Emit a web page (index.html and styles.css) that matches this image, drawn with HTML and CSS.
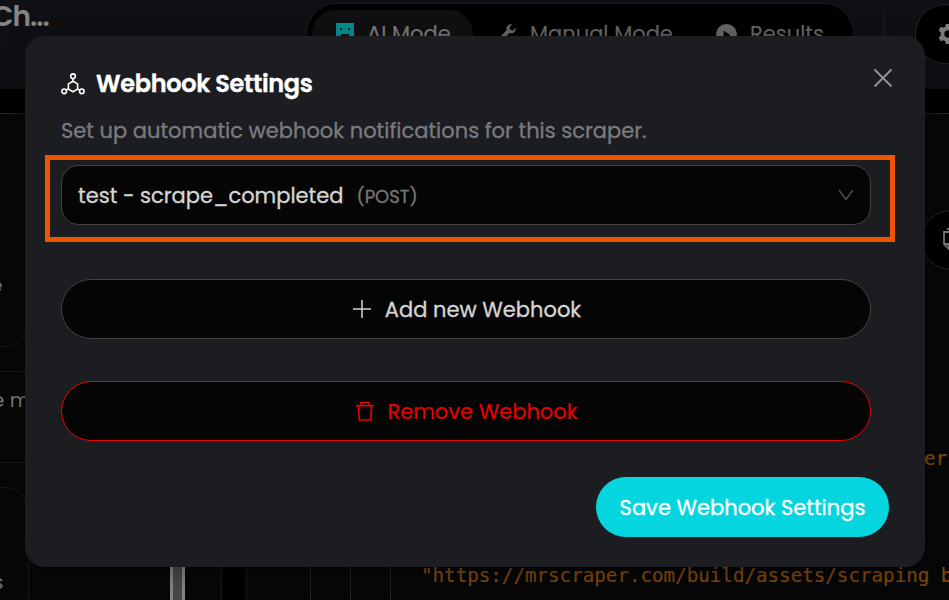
FILE: index.html
```html
<!DOCTYPE html>
<html lang="en">
<head>
<meta charset="utf-8">
<title>Webhook Settings</title>
<link rel="stylesheet" href="styles.css">
</head>
<body>
<div class="app">
  <header class="topbar">
    <div class="chat-name"><span>Ch...</span></div>
    <nav class="modes">
      <div class="mode active">
        <svg class="robot" viewBox="0 0 18 18"><path fill="#008b91" d="M0 0h18v18H0z"/><path fill="#111" d="M4 5h2v2H4zM12 5h2v2h-2zM5 11h8v2H5z"/></svg>
        <span>AI Mode</span>
      </div>
      <div class="mode manual">
        <svg class="wrench" viewBox="0 0 16 16"><path fill="#656565" d="M15.600 3.800 12.900 6.500 10.200 5.800 9.500 3.100 12.200.4A4.600 4.600 0 0 0 6.700 6.300L.7 12.200a2 2 0 0 0 2.900 2.900l6-6a4.600 4.600 0 0 0 6-5.300z"/></svg>
        <span>Manual Mode</span>
      </div>
      <div class="mode results">
        <svg class="play" viewBox="0 0 22 22"><circle cx="11" cy="11" r="11" fill="#656565"/><path fill="#000" d="m8 7 7 4.500L8 16z"/></svg>
        <span>Results</span>
      </div>
    </nav>
    <div class="bar-divider"></div>
    <div class="round-btn gear">
      <svg viewBox="0 0 24 24"><path fill="#7b7b7b" fill-rule="evenodd" d="m9.600 1-.6 3-2 1.100-2.900-1L1.700 8.200 4 10.200v3.600l-2.300 2 2.400 4.100 2.900-1 2 1.100.6 3h4.800l.6-3 2-1.100 2.900 1 2.400-4.100-2.300-2v-3.600l2.300-2-2.400-4.100-2.900 1-2-1.100-.6-3zM12 8a4 4 0 1 1 0 8 4 4 0 0 1 0-8z"/></svg>
    </div>
  </header>
  <main class="workspace">
    <aside class="history">
      <div class="card card-top"><span>e</span></div>
      <div class="row"><span>e m</span></div>
      <div class="card card-bottom"><span>s</span></div>
    </aside>
    <div class="scroll-zone"><div class="scrollbar"></div></div>
    <div class="gutter"></div>
    <section class="code">
      <div class="guide"></div><div class="guide"></div><div class="guide"></div>
      <div class="source">
        <div class="copy-row"><div class="round-btn copy">
          <svg viewBox="0 0 24 24" fill="none" stroke="#777" stroke-width="1.800"><path d="M6 2h15v17M3 5h14v17H8l-5-5zM3 17h5v5"/></svg>
        </div></div>
        <div class="code-tail">er</div>
        <div class="code-line">"https://mrscraper.com/build/assets/scraping b</div>
      </div>
    </section>
  </main>
</div>

<div class="modal">
  <div class="modal-head">
    <svg class="hook" viewBox="0 0 24 22" fill="none" stroke="#fff" stroke-width="1.600"><circle cx="12" cy="3.200" r="2.300"/><circle cx="3.200" cy="18.300" r="2.300"/><circle cx="20.800" cy="18.300" r="2.300"/><path d="M12 5.500v2.700M5.200 17.100l2.500-1.400M18.800 17.100l-2.500-1.400M12 8.200l4.600 2.700v5.200L12 18.800l-4.600-2.700v-5.200z"/></svg>
    <h2>Webhook Settings</h2>
    <svg class="close" viewBox="0 0 20 20" stroke="#96979a" stroke-width="1.800"><path d="m1.500 1.500 17 17M18.500 1.500l-17 17"/></svg>
  </div>
  <p class="lead">Set up automatic webhook notifications for this scraper.</p>
  <div class="highlight">
    <div class="select">
      <span class="value">test - scrape_completed</span><span class="method">(POST)</span>
      <svg class="chevron" viewBox="0 0 16 12" fill="none" stroke="#4f4f4f" stroke-width="1.400"><path d="m1 1 7 9.500L15 1"/></svg>
    </div>
  </div>
  <button class="wide add">
    <svg class="plus" viewBox="0 0 18 18" stroke="#d5d5d5" stroke-width="1.500"><path d="M9 0v18M0 9h18"/></svg>
    <span>Add new Webhook</span>
  </button>
  <button class="wide remove">
    <svg class="trash" viewBox="0 0 18 20" fill="none" stroke="#ec0000" stroke-width="1.600"><path d="M0 4.800h18M5 4.500V1.500h8v3M2.500 5l.8 14h11.400l.8-14"/></svg>
    <span>Remove Webhook</span>
  </button>
  <button class="save">Save Webhook Settings</button>
</div>
</body>
</html>
```
FILE: styles.css
```css
* { box-sizing: border-box; }
body {
  margin: 0;
  width: 949px;
  height: 600px;
  overflow: hidden;
  position: relative;
  background: #000;
  font-family: Poppins, Inter, "Liberation Sans", sans-serif;
}
svg { display: block; flex: none; overflow: visible; }
span { white-space: nowrap; }

.app { display: flex; flex-direction: column; height: 600px; overflow: hidden; }
.topbar { display: flex; height: 89px; background: #0f1013; flex: none; }
.topbar > * { flex: none; }
.chat-name {
  width: 306px;
  margin-left: -8px;
  margin-right: 8px;
  font-size: 28px;
  font-weight: 600;
  letter-spacing: -1px;
  line-height: 33px;
  color: #858585;
}
.modes {
  display: flex;
  width: 548px;
  height: 62px;
  margin-top: 3px;
  padding: 6px 5px;
  border: 1px solid #191a1e;
  border-radius: 31px;
  background: #000;
  color: #656565;
  font-size: 21px;
  line-height: 48px;
  -webkit-text-stroke: .2px;
}
.mode { display: flex; align-items: center; border-radius: 24px; height: 48px; }
.active { width: 161px; padding-left: 24px; gap: 13px; background: #101010; color: #777; }
.robot { width: 18px; height: 18px; margin-top: -5px; }
.manual { width: 217px; padding-left: 27px; gap: 14px; }
.wrench { width: 16px; height: 16px; margin-top: -5px; }
.results { padding-left: 26px; gap: 13px; }
.play { width: 21px; height: 21px; }
.bar-divider { width: 1px; height: 44px; margin: 11px 31px 0 30px; background: #1e1f22; }
.round-btn { width: 60px; height: 60px; border: 1px solid #242424; border-radius: 50%; background: #000; flex: none; }
.gear { margin: 4px 0 0 -1px; padding: 18px 0 0 21px; }
.gear svg { width: 22px; height: 22px; }

.workspace { display: flex; margin-top: 24px; height: 487px; border-top: 1px solid #222; background: #070707; }
.history { width: 29px; border-right: 1px solid #17181b; color: #777; font-size: 20px; flex: none; }
.card { border: 1px solid #17181b; border-left: 0; width: 29px; }
.card span, .row span { display: block; line-height: 30px; }
.card-top { height: 233px; border-top: 0; border-radius: 0 0 24px 0; padding-top: 156px; }
.card-top span { margin-left: -10px; }
.row { height: 92px; margin-top: 24px; padding-top: 13px; border: 1px solid #17181b; border-width: 1px 0; }
.row span { margin-left: -8px; }
.card-bottom { height: 140px; margin-top: 24px; border-radius: 0 24px 0 0; padding-top: 79px; }
.card-bottom span { margin-left: -7px; }
.scroll-zone { width: 193px; padding-left: 141px; border-right: 1px solid #17181b; flex: none; }
.scrollbar { width: 15px; height: 487px; background: #484848; border: solid #858585; border-width: 0 3px; }
.gutter { width: 25px; background: #000; border-right: 1px solid #17181b; flex: none; }
.code { display: flex; flex: 1; padding-left: 24px; min-width: 0; }
.guide { width: 40px; border-left: 1px solid #24241f; flex: none; }
.guide:first-child { margin-left: 39px; }
.guide:nth-child(3) { width: 31px; }
.source { flex: 1; color: #81490d; font-family: "DejaVu Sans Mono", monospace; font-size: 19.2px; line-height: 24px; white-space: nowrap; -webkit-text-stroke: .2px; }
.copy-row { display: flex; height: 156px; margin-top: 96px; padding-left: 500px; }
.copy { padding: 16px 0 0 19px; }
.copy svg { width: 24px; height: 24px; }
.code-tail { margin-top: 81px; padding-left: 503px; }
.code-line { margin-top: 93px; }

.modal {
  position: absolute;
  left: 25px;
  top: 36px;
  width: 900px;
  height: 531px;
  border-radius: 20px;
  background: #1c1d21;
  box-shadow: 0 8px 24px rgba(0, 0, 0, .3);
}
.modal-head { display: flex; height: 64px; padding: 30px 32px 0 36px; }
.hook { width: 24px; height: 22px; margin-top: 7px; }
h2 { margin: 0 0 0 11px; font-size: 24px; line-height: 36px; font-weight: 600; letter-spacing: -.33px; color: #fff; -webkit-text-stroke: .4px; }
.close { width: 20px; height: 20px; margin: 2px 0 0 auto; }
.lead { margin: 15px 0 0 36px; font-size: 21px; line-height: 32px; color: #7a7b7e; -webkit-text-stroke: .3px; }
.highlight { width: 850px; height: 87px; margin: 8px 0 0 20px; padding: 5px 11px; border: 5px solid #ef5400; }
.select {
  display: flex;
  align-items: center;
  width: 810px;
  height: 60px;
  padding: 0 16px;
  border: 1px solid #424242;
  border-radius: 18px;
  background: #050505;
  color: #d5d5d5;
  font-size: 21px;
  -webkit-text-stroke: .3px;
}
.method { margin: 2px 0 0 13px; font-size: 18px; color: #777; }
.chevron { width: 16px; height: 12px; margin-left: auto; }
.wide {
  display: flex;
  align-items: center;
  justify-content: center;
  width: 810px;
  height: 60px;
  margin-left: 36px;
  padding: 0;
  border: 1px solid #424242;
  border-radius: 30px;
  background: #050505;
  color: #d5d5d5;
  font: 400 21px Poppins, Inter, sans-serif;
  -webkit-text-stroke: .3px;
}
.add { margin-top: 37px; padding-left: 2px; gap: 14px; }
.plus { width: 18px; height: 18px; }
.remove { margin-top: 42px; padding-left: 2px; gap: 13px; border-color: #ec0000; color: #ec0000; -webkit-text-stroke: .1px; }
.trash { width: 18px; height: 20px; margin-top: -1px; }
.save {
  display: block;
  width: 293px;
  height: 60px;
  margin: 36px 0 0 571px;
  padding: 0;
  border: 0;
  border-radius: 30px;
  background: #05d5df;
  color: #fff;
  font: 400 21px Poppins, Inter, sans-serif;
  -webkit-text-stroke: .3px;
}
```
